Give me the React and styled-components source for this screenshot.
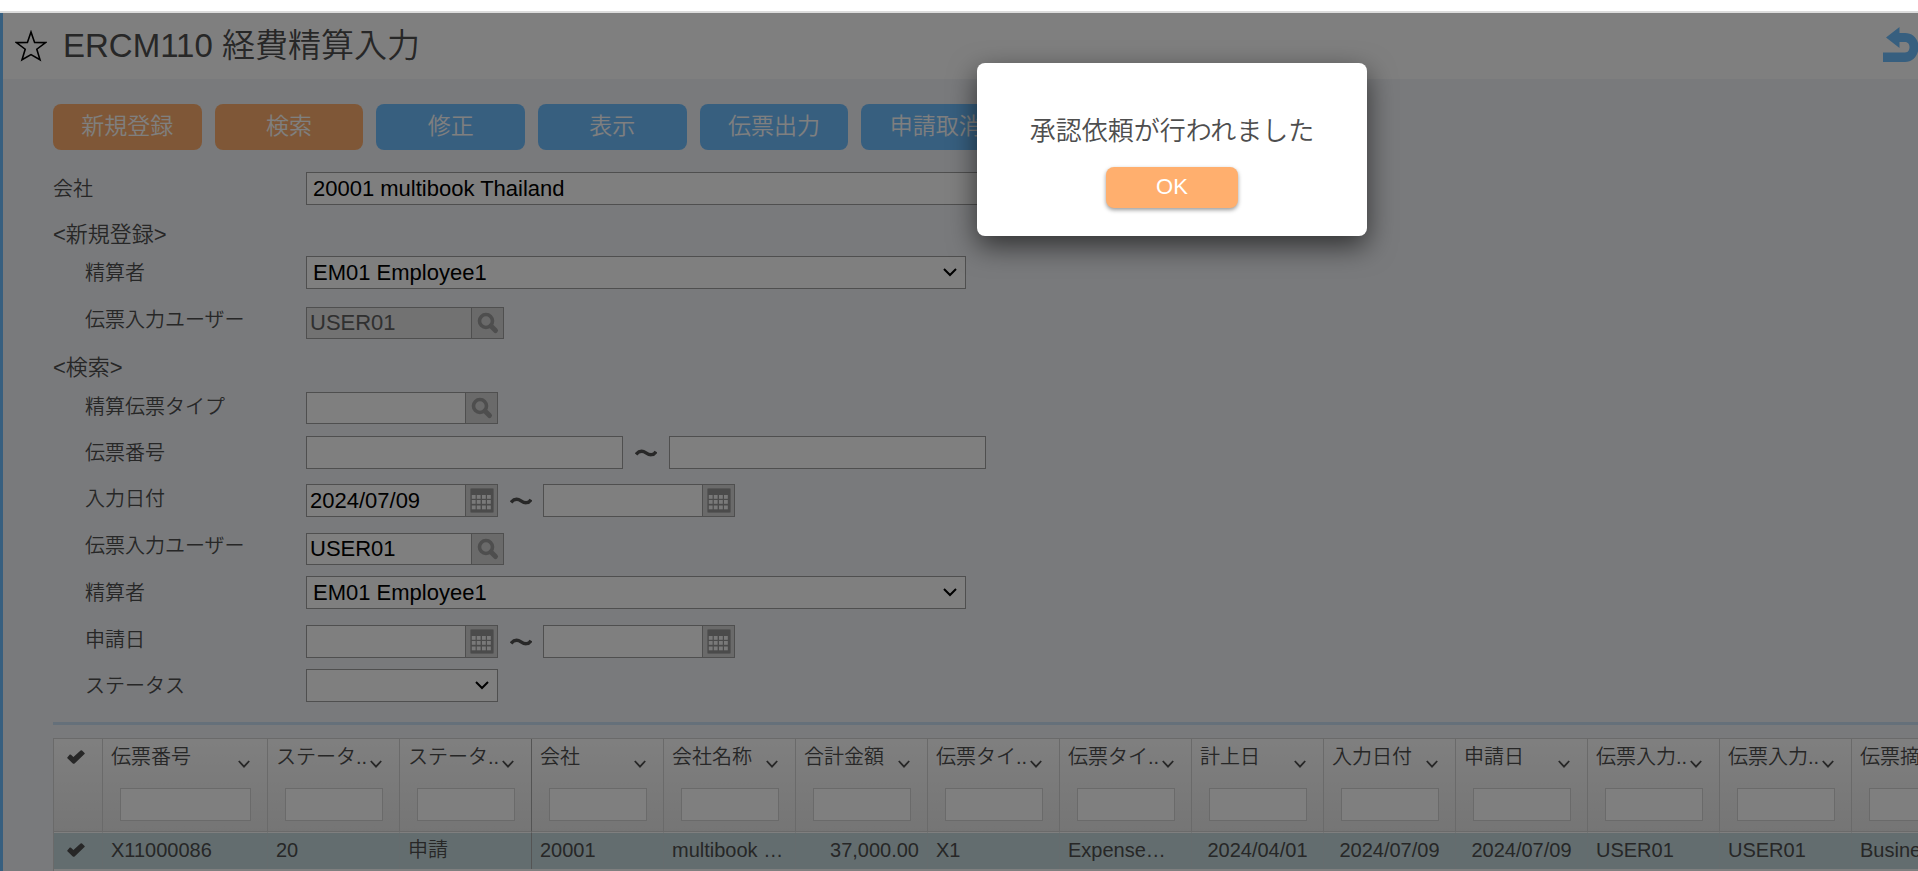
import React, { useState } from "react";
import styled, { createGlobalStyle, css } from "styled-components";

const columns = [
  { title: "伝票番号", value: "X11000086", wide: true },
  { title: "ステータ..", value: "20" },
  { title: "ステータ..", value: "申請", frozen: true },
  { title: "会社", value: "20001" },
  { title: "会社名称", value: "multibook …" },
  { title: "合計金額", value: "37,000.00", align: "right" },
  { title: "伝票タイ..", value: "X1" },
  { title: "伝票タイ..", value: "Expense…" },
  { title: "計上日", value: "2024/04/01", align: "center" },
  { title: "入力日付", value: "2024/07/09", align: "center" },
  { title: "申請日", value: "2024/07/09", align: "center" },
  { title: "伝票入力..", value: "USER01" },
  { title: "伝票入力..", value: "USER01" },
  { title: "伝票摘要", value: "Business…" },
];

const StarIcon = () => (
  <StarSvg viewBox="0 0 32 32" aria-hidden="true">
    <path d="M16 2 L19.6 12.4 L30.6 12.6 L21.8 19.2 L25 29.8 L16 24.6 L7 29.8 L10.2 19.2 L1.4 12.6 L12.4 12.4 Z" />
  </StarSvg>
);

const BackIcon = () => (
  <svg width="36" height="35" viewBox="0 0 36 35" aria-hidden="true">
    <path
      fill="#6fbeff"
      d="M4 10.5 L17.5 0 V6 H23 C31 6 36.5 12 36.5 20 C36.5 28.5 31 35 23 35 H1 V25.5 H23 C26.5 25.5 27.5 22.5 27.5 20 C27.5 17.5 26 15 23 15 H17.5 V21 Z"
    />
  </svg>
);

const SearchIcon = () => (
  <svg width="24" height="24" viewBox="0 0 24 24" aria-hidden="true">
    <circle cx="10" cy="10" r="6.5" fill="none" stroke="#9c9c9c" strokeWidth="3.6" />
    <path d="M15 15 L19.5 19.5" stroke="#9c9c9c" strokeWidth="5" strokeLinecap="round" />
  </svg>
);

const CalendarIcon = () => (
  <svg width="24" height="25" viewBox="0 0 24 25" aria-hidden="true">
    <rect x="0.5" y="0.5" width="23" height="24" rx="1" fill="#979797" stroke="#aeaeae" />
    {[7, 12, 17.5].map((y) =>
      [1.8, 6.8, 12, 17].map((x) => (
        <rect key={`${x}-${y}`} x={x} y={y} width="3.8" height="3.8" fill="#f2f2f2" />
      ))
    )}
  </svg>
);

const CheckIcon = () => (
  <svg width="18" height="14" viewBox="0 0 18 14" aria-hidden="true">
    <path
      fill="#4e4e4e"
      d="M0.3 7.4 L2.8 4.6 Q3.4 4.2 4 4.8 L6.4 7 L13.6 0.5 Q14.3 0 15 0.6 L17.6 3 Q18 3.5 17.5 4 L7.6 13.4 Q6.6 14.2 5.8 13.4 L0.4 8.2 Q0 7.8 0.3 7.4 Z"
    />
  </svg>
);

const TildeIcon = () => (
  <svg width="22" height="8" viewBox="0 0 22 8" aria-hidden="true">
    <path
      d="M1 5.4 C4 1.8 7.5 1.4 11 3.8 C14.5 6.2 18.5 6.8 21 2.6"
      fill="none"
      stroke="#505050"
      strokeWidth="3.4"
    />
  </svg>
);

const Dropdown = ({ id, width, value }) => (
  <SelectWrap $width={width}>
    <Select id={id} defaultValue={value}>
      <option value={value}>{value}</option>
    </Select>
    <SelectArrow viewBox="0 0 14 9" aria-hidden="true">
      <path d="M1 1 L7 7 L13 1" />
    </SelectArrow>
  </SelectWrap>
);

const Lookup = ({ id, width, value = "", disabled }) => (
  <Picker $width={width} $height={32}>
    <PickerInput id={id} defaultValue={value} disabled={disabled} />
    <PickerButton type="button" aria-label="検索">
      <SearchIcon />
    </PickerButton>
  </Picker>
);

const DateField = ({ id, value = "", label }) => (
  <Picker $width={192} $height={33}>
    <PickerInput id={id} defaultValue={value} aria-label={label} />
    <PickerButton type="button" aria-label="カレンダー">
      <CalendarIcon />
    </PickerButton>
  </Picker>
);

const App = () => {
  const [open, setOpen] = useState(true);

  return (
    <Page>
      <GlobalStyle />
      <TopStrip />
      <Shell>
        <Pane>
          <Header>
            <FavButton type="button" aria-label="お気に入り">
              <StarIcon />
            </FavButton>
            <Title>ERCM110 経費精算入力</Title>
            <BackButton type="button" aria-label="戻る">
              <BackIcon />
            </BackButton>
          </Header>

          <Content>
            <Toolbar>
              <ToolButton $primary>新規登録</ToolButton>
              <ToolButton $primary>検索</ToolButton>
              <ToolButton>修正</ToolButton>
              <ToolButton>表示</ToolButton>
              <ToolButton>伝票出力</ToolButton>
              <ToolButton>申請取消</ToolButton>
            </Toolbar>

            <Row $height={47}>
              <Label htmlFor="company">会社</Label>
              <TextInput id="company" $width={740} $inset defaultValue="20001 multibook Thailand" />
            </Row>

            <Section $height={37}>&lt;新規登録&gt;</Section>
            <Row $height={51}>
              <Label htmlFor="newPayer" $indent>精算者</Label>
              <Dropdown id="newPayer" width={660} value="EM01 Employee1" />
            </Row>
            <Row $height={45}>
              <Label htmlFor="newUser" $indent $line={26}>伝票入力ユーザー</Label>
              <Lookup id="newUser" width={198} value="USER01" disabled />
            </Row>

            <Section $height={40}>&lt;検索&gt;</Section>
            <Row $height={44}>
              <Label htmlFor="slipType" $indent $line={30}>精算伝票タイプ</Label>
              <Lookup id="slipType" width={192} />
            </Row>
            <Row $height={48}>
              <Label htmlFor="slipFrom" $indent>伝票番号</Label>
              <TextInput id="slipFrom" $width={317} />
              <Between $width={46}><TildeIcon /></Between>
              <TextInput aria-label="伝票番号 終了" $width={317} />
            </Row>
            <Row $height={49}>
              <Label htmlFor="entryFrom" $indent $line={30}>入力日付</Label>
              <DateField id="entryFrom" value="2024/07/09" />
              <Between $width={45}><TildeIcon /></Between>
              <DateField label="入力日付 終了" />
            </Row>
            <Row $height={43}>
              <Label htmlFor="user" $indent $line={26}>伝票入力ユーザー</Label>
              <Lookup id="user" width={198} value="USER01" />
            </Row>
            <Row $height={49}>
              <Label htmlFor="payer" $indent>精算者</Label>
              <Dropdown id="payer" width={660} value="EM01 Employee1" />
            </Row>
            <Row $height={44}>
              <Label htmlFor="applyFrom" $indent $line={30}>申請日</Label>
              <DateField id="applyFrom" />
              <Between $width={45}><TildeIcon /></Between>
              <DateField label="申請日 終了" />
            </Row>
            <Row $height={53}>
              <Label htmlFor="status" $indent>ステータス</Label>
              <Dropdown id="status" width={192} value="" />
            </Row>

            <Divider />

            <GridWrap>
              <Grid>
                <colgroup>
                  <CheckCol />
                  {columns.map((col, index) => (
                    <DataCol key={index} $wide={col.wide} />
                  ))}
                </colgroup>
                <thead>
                  <tr>
                    <HeadCell>
                      <HeadCheck>
                        <CheckIcon />
                      </HeadCheck>
                    </HeadCell>
                    {columns.map((col, index) => (
                      <HeadCell key={index} $frozen={col.frozen}>
                        <HeadLine>
                          <HeadText>{col.title}</HeadText>
                          <HeadArrow viewBox="0 0 12 8" aria-hidden="true">
                            <path d="M0.8 1 L6 6.6 L11.2 1" />
                          </HeadArrow>
                        </HeadLine>
                        <Filter>
                          <FilterInput aria-label={col.title} />
                        </Filter>
                      </HeadCell>
                    ))}
                  </tr>
                </thead>
                <tbody>
                  <tr>
                    <CheckCell>
                      <CheckIcon />
                    </CheckCell>
                    {columns.map((col, index) => (
                      <Cell key={index} $align={col.align} $frozen={col.frozen}>
                        {col.value}
                      </Cell>
                    ))}
                  </tr>
                </tbody>
              </Grid>
            </GridWrap>
          </Content>
        </Pane>

        {open && (
          <Overlay>
            <Dialog role="dialog" aria-modal="true">
              <Message>承認依頼が行われました</Message>
              <OkButton type="button" onClick={() => setOpen(false)}>OK</OkButton>
            </Dialog>
          </Overlay>
        )}
      </Shell>
    </Page>
  );
};

// Styled Components
const GlobalStyle = createGlobalStyle`
  * {
    box-sizing: border-box;
  }

  body {
    margin: 0;
    overflow: hidden;
    color: #4e4e4e;
  }

  body, button, input, select {
    font-family: "Liberation Sans", "Noto Sans CJK JP", sans-serif;
    font-weight: 350;
  }

  svg {
    display: block;
  }
`;

const Page = styled.div`
  height: 100vh;
  display: flex;
  flex-direction: column;
  overflow: hidden;
`;

const TopStrip = styled.div`
  flex: none;
  height: 13px;
  background: #fff;
  border-bottom: 2px solid #dcdcdc;
`;

const Shell = styled.div`
  position: relative;
  flex: 1;
  min-height: 0;
`;

const Pane = styled.div`
  height: 100%;
  display: flex;
  flex-direction: column;
  overflow: hidden;
  background: #f3f5f8;
  border-left: 3px solid #6fbeff;
`;

const Header = styled.header`
  flex: none;
  height: 66px;
  padding-left: 12px;
  display: flex;
  align-items: center;
  background: #fff;
`;

const iconButton = css`
  padding: 0;
  border: 0;
  background: none;
  cursor: pointer;
`;

const FavButton = styled.button`
  ${iconButton}
`;

const BackButton = styled.button`
  ${iconButton}
  margin: 0 0 4px auto;
`;

const StarSvg = styled.svg`
  width: 32px;
  height: 32px;
  fill: none;
  stroke: #000;
  stroke-width: 1.6;
`;

const Title = styled.h1`
  margin: 0 0 0 16px;
  font-size: 33px;
  font-weight: 350;
  line-height: 40px;
`;

const Content = styled.main`
  flex: 1;
  min-height: 0;
  display: flex;
  flex-direction: column;
  padding: 25px 0 0 50px;
`;

const Toolbar = styled.div`
  flex: none;
  width: 957px;
  display: grid;
  grid-template-columns: repeat(6, 1fr);
  gap: 13px;
  margin-bottom: 22px;
`;

const ToolButton = styled.button.attrs({ type: "button" })`
  height: 46px;
  padding: 0 0 6px;
  border: 0;
  border-radius: 8px;
  background: ${({ $primary }) => ($primary ? "#ffaf6e" : "#6fbeff")};
  color: #fff;
  font-size: 23px;
  cursor: pointer;
`;

const Row = styled.div`
  flex: none;
  height: ${({ $height }) => $height}px;
  display: flex;
  align-items: flex-start;
`;

const Label = styled.label`
  width: 253px;
  padding-left: ${({ $indent }) => ($indent ? 32 : 0)}px;
  font-size: 20px;
  line-height: ${({ $line }) => $line || 34}px;
`;

const Section = styled.div`
  flex: none;
  height: ${({ $height }) => $height}px;
  font-size: 22px;
  line-height: 32px;
`;

const field = css`
  margin: 0;
  border: 1px solid #9e9e9e;
  border-radius: 0;
  background: #fff;
  color: #000;
  font-size: 22px;
  outline: none;
`;

const TextInput = styled.input`
  ${field}
  width: ${({ $width }) => $width}px;
  height: 33px;
  padding: 0 ${({ $inset }) => ($inset ? 6 : 3)}px;
`;

const SelectWrap = styled.div`
  position: relative;
  width: ${({ $width }) => $width}px;
  height: 33px;
`;

const Select = styled.select`
  ${field}
  appearance: none;
  width: 100%;
  height: 100%;
  padding: 0 30px 0 6px;
`;

const SelectArrow = styled.svg`
  position: absolute;
  top: 12px;
  right: 9px;
  width: 14px;
  height: 9px;
  fill: none;
  stroke: #000;
  stroke-width: 2;
  pointer-events: none;
`;

const Picker = styled.div`
  display: flex;
  width: ${({ $width }) => $width}px;
  height: ${({ $height }) => $height}px;
  border: 1px solid #9e9e9e;
`;

const PickerInput = styled.input`
  ${field}
  flex: 1;
  min-width: 0;
  padding: 0 3px;
  border: 0;

  &:disabled {
    background: #e4e4e4;
    color: #606060;
  }
`;

const PickerButton = styled.button`
  width: 32px;
  padding: 0;
  display: flex;
  align-items: center;
  justify-content: center;
  border: 0;
  border-left: 1px solid #9e9e9e;
  background: #d4d4d4;
  cursor: pointer;
`;

const Between = styled.div`
  width: ${({ $width }) => $width}px;
  height: 33px;
  display: flex;
  align-items: center;
  justify-content: center;
`;

const Divider = styled.div`
  flex: none;
  height: 3px;
  margin-bottom: 13px;
  background: #cae0f4;
`;

const GridWrap = styled.div`
  flex: 1;
  min-height: 0;
  overflow: hidden;
  background: #fff;
  border-top: 1px solid #d4d4d4;
  border-left: 1px solid #d4d4d4;
`;

const Grid = styled.table`
  width: 1930px;
  table-layout: fixed;
  border-collapse: separate;
  border-spacing: 0;
  font-size: 20px;
`;

const CheckCol = styled.col`
  width: 49px;
`;

const DataCol = styled.col`
  width: ${({ $wide }) => ($wide ? 165 : 132)}px;
`;

const HeadCell = styled.th`
  height: 93px;
  padding: 4px 0 0;
  vertical-align: top;
  text-align: left;
  font-weight: 350;
  background: linear-gradient(#fff, #ebebeb);
  border-right: 1px solid ${({ $frozen }) => ($frozen ? "#a8a8a8" : "#d4d4d4")};
  border-bottom: 1px solid #d4d4d4;
`;

const HeadCheck = styled.div`
  height: 28px;
  padding-left: 13px;
  display: flex;
  align-items: center;
`;

const HeadLine = styled.div`
  display: flex;
  align-items: flex-end;
  padding: 0 17px 0 8px;
`;

const HeadText = styled.span`
  flex: 1;
  line-height: 28px;
  white-space: nowrap;
`;

const HeadArrow = styled.svg`
  flex: none;
  width: 12px;
  height: 8px;
  margin-bottom: 3px;
  fill: none;
  stroke: #4e4e4e;
  stroke-width: 1.8;
`;

const Filter = styled.div`
  padding: 17px 16px 0 17px;
`;

const FilterInput = styled.input`
  display: block;
  width: 100%;
  height: 33px;
  border: 1px solid #d4d4d4;
  background: #fff;
  font-size: 20px;
`;

const Cell = styled.td`
  height: 37px;
  padding: 0 8px 2px;
  text-align: ${({ $align }) => $align || "left"};
  line-height: 30px;
  white-space: nowrap;
  overflow: hidden;
  background: #c6dbdf;
  border-top: 1px solid #fff;
  border-right: 1px solid ${({ $frozen }) => ($frozen ? "#a8a8a8" : "#cad9dc")};
`;

const CheckCell = styled(Cell)`
  padding-left: 13px;
`;

const Overlay = styled.div`
  position: absolute;
  inset: 0;
  display: flex;
  justify-content: center;
  align-items: flex-start;
  padding: 50px 0 0 426px;
  background: rgba(0, 0, 0, 0.5);
`;

const Dialog = styled.div`
  width: 390px;
  padding: 52px 20px 28px;
  display: flex;
  flex-direction: column;
  align-items: center;
  gap: 20px;
  background: #fff;
  border-radius: 8px;
  box-shadow: 0 10px 28px rgba(0, 0, 0, 0.6);
`;

const Message = styled.p`
  margin: 0;
  font-size: 26px;
  line-height: 32px;
  white-space: nowrap;
`;

const OkButton = styled.button`
  width: 132px;
  height: 41px;
  padding: 0 0 2px;
  border: 0;
  border-radius: 8px;
  background: #ffaf6e;
  box-shadow: 0 2px 4px rgba(0, 0, 0, 0.4);
  color: #fff;
  font-size: 22px;
  cursor: pointer;
`;

export default App;
